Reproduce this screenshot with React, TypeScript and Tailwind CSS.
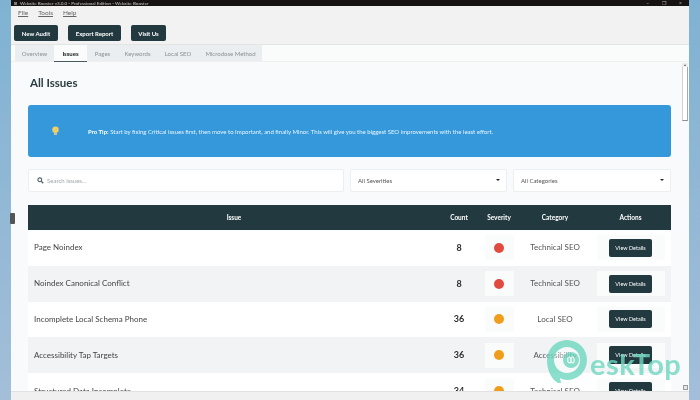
const font = { fontFamily: 'Lato, "Noto Sans", sans-serif' };

const rows = [
  { name: "Page Noindex", count: "8", color: "bg-[#e04a3f]", cat: "Technical SEO" },
  { name: "Noindex Canonical Conflict", count: "8", color: "bg-[#e04a3f]", cat: "Technical SEO" },
  { name: "Incomplete Local Schema Phone", count: "36", color: "bg-[#f09d1c]", cat: "Local SEO" },
  { name: "Accessibility Tap Targets", count: "36", color: "bg-[#f09d1c]", cat: "Accessibility" },
  { name: "Structured Data Incomplete", count: "34", color: "bg-[#f09d1c]", cat: "Technical SEO" },
];

const tabs = [
  { label: "Overview", w: "w-[39px]" },
  { label: "Pages", w: "w-[31px]" },
  { label: "Keywords", w: "w-[39px]" },
  { label: "Local SEO", w: "w-[42px]" },
  { label: "Microdose Method", w: "w-[63px]" },
];

function Caret() {
  return <span className="w-0 h-0 border-x-[2.5px] border-x-transparent border-t-[2.5px] border-t-[#222] -mt-[2px]" />;
}

function Tab({ label, w }: { label: string; w: string }) {
  return <span className={`h-[16px] flex items-center justify-center text-[6px] text-[#8a9095] bg-[#ebeef0] ${w}`}>{label}</span>;
}

export default function App() {
  return (
    <div style={font} className="w-[700px] h-[400px] overflow-hidden flex bg-[#9db9d4] blur-[0.35px] relative">
      <div className="w-[11px] shrink-0 bg-gradient-to-b from-[#7fb2d2] to-[#a3bed8]" />
      <div className="w-[678px] shrink-0 flex flex-col bg-[#f8fafb] relative">
        <div className="h-[6px] shrink-0 bg-[#161312] flex items-center justify-between pl-[3px] pr-[7px] overflow-hidden">
          <span className="flex items-center gap-[3px] text-[4.6px] leading-[6px] text-[#c9c9c9]">
            <span className="w-[3px] h-[3px] bg-[#777]" />
            Website Booster v3.0.0 - Professional Edition - Website Booster
          </span>
          <span className="flex gap-[13px] text-[5px] leading-[6px] text-[#bbb]">
            <span>–</span>
            <span>❐</span>
            <span>×</span>
          </span>
        </div>
        <div className="h-[39px] shrink-0 bg-[#f2f2f3] border-b border-[#e4e4e4]">
          <div className="flex gap-[10px] pl-[7px] pt-[3px] text-[6.5px] leading-[8px] text-[#666] h-[19px]">
            <span className="underline">File</span>
            <span className="underline">Tools</span>
            <span className="underline">Help</span>
          </div>
          <div className="flex gap-[10px] pl-[3px]">
            <button className="h-[16px] w-[44px] rounded-[2px] bg-[#21393f] text-white text-[6px] font-bold">New Audit</button>
            <button className="h-[16px] w-[53px] rounded-[2px] bg-[#21393f] text-white text-[6px] font-bold">Export Report</button>
            <button className="h-[16px] w-[35px] rounded-[2px] bg-[#21393f] text-white text-[6px] font-bold">Visit Us</button>
          </div>
        </div>
        <div className="h-[17px] shrink-0 flex pl-[4px] bg-[#fafbfb] border-b border-[#f0f0f0]">
          <Tab {...tabs[0]} />
          <span className="w-[33px] h-[17px] flex items-center justify-center text-[6px] text-[#222] font-bold bg-[#fafbfb] border-b-[1.5px] border-[#4a5a60]">Issues</span>
          {tabs.slice(1).map((t) => (
            <Tab key={t.label} {...t} />
          ))}
        </div>
        <div className="flex-1 min-h-0 overflow-hidden pl-[17px] pr-[18px] relative">
          <h1 className="text-[11.5px] leading-[16px] font-bold text-[#2b3d42] mt-[13px] ml-[2px]">All Issues</h1>
          <div className="mt-[14px] h-[52px] rounded-[3px] bg-[#3498db] flex items-center text-[6px] text-[#e8f4fc]">
            <svg width="9" height="10" viewBox="0 0 9 10" className="ml-[23px] mr-[28px] shrink-0">
              <circle cx="4.5" cy="3.8" r="3.2" fill="#f2cf63" />
              <rect x="3" y="7" width="3" height="2" fill="#c9c0a0" />
            </svg>
            <span>
              <b className="text-white">Pro Tip:</b> Start by fixing Critical issues first, then move to Important, and finally Minor. This will give you the biggest SEO improvements with the least effort.
            </span>
          </div>
          <div className="mt-[12px] flex h-[23px] gap-[6px] text-[6px] text-[#555]">
            <div className="w-[316px] rounded-[2px] bg-white border border-[#eceff1] flex items-center pl-[8px] gap-[3px] text-[#a0a6ab]">
              <svg width="7" height="7" viewBox="0 0 7 7">
                <circle cx="2.8" cy="2.8" r="1.9" fill="none" stroke="#50606a" strokeWidth="1.1" />
                <path d="M4.2 4.2 6.3 6.3" stroke="#50606a" strokeWidth="1.3" />
              </svg>
              <span>Search issues...</span>
            </div>
            <div className="w-[157px] rounded-[2px] bg-white border border-[#eceff1] flex items-center justify-between pl-[7px] pr-[6px]">
              <span>All Severities</span>
              <Caret />
            </div>
            <div className="w-[158px] rounded-[2px] bg-white border border-[#eceff1] flex items-center justify-between pl-[7px] pr-[6px]">
              <span>All Categories</span>
              <Caret />
            </div>
          </div>
          <div className="mt-[13px] w-[643px]">
            <div className="h-[25px] bg-[#21393f] flex items-center text-white text-[6.5px] font-bold text-center">
              <span className="w-[412px]">Issue</span>
              <span className="w-[38px]">Count</span>
              <span className="w-[42px]">Severity</span>
              <span className="w-[70px]">Category</span>
              <span className="w-[81px]">Actions</span>
            </div>
            {rows.map((r, i) => (
              <div key={r.name} className={`h-[35.8px] flex items-center ${i % 2 ? "bg-[#f1f3f5]" : "bg-white"}`}>
                <span className="w-[412px] pl-[6px] text-[8px] leading-[10px] pb-[1px] text-[#444]">{r.name}</span>
                <span className="w-[38px] text-center text-[9px] leading-[12px] font-bold text-[#2d2d2d]">{r.count}</span>
                <span className="w-[42px] flex justify-center">
                  <span className="w-[29px] h-[25px] flex items-center justify-center bg-[#fafbfb]">
                    <span className={`w-[10px] h-[10px] rounded-full ${r.color}`} />
                  </span>
                </span>
                <span className="w-[70px] text-center text-[8px] leading-[10px] pb-[1px] text-[#555]">{r.cat}</span>
                <span className="w-[81px] flex justify-center">
                  <span className="w-[68px] h-[25px] flex items-center justify-center bg-[#fafbfb]">
                    <span className="w-[43px] h-[18px] rounded-[2px] bg-[#21393f] text-white text-[5.5px] flex items-center justify-center">View Details</span>
                  </span>
                </span>
              </div>
            ))}
          </div>
          <div className="absolute right-[1px] top-[1px] w-[6px] h-[58px] flex flex-col">
            <div className="h-[4px] flex items-center justify-center bg-[#eeeeee]">
              <span className="w-0 h-0 border-x-[1.5px] border-x-transparent border-b-[2px] border-b-[#666]" />
            </div>
            <div className="flex-1 bg-white border-l border-l-[#d0d0d0] border-r border-r-[#a9a9a9] border-b border-b-[#8f8f8f]" />
          </div>
          <div className="absolute right-[1px] bottom-[1px] w-[5px] h-[5px] border border-[#9a9a9a] bg-[#e8e8e8]" />
        </div>
        <div className="h-[9px] shrink-0 bg-[#f0f0f0] border-t border-[#e2e2e2]" />
      </div>
      <div className="w-[11px] shrink-0 bg-gradient-to-b from-[#7fb2d2] to-[#a3bed8]" />
      <div className="absolute left-[10px] top-[213px] w-[5px] h-[11px] rounded-[1px] bg-[#555]" />
      <div className="absolute left-[545px] top-[339px] flex items-start opacity-80">
        <svg width="44" height="46" viewBox="0 0 44 46">
          <circle cx="22" cy="21" r="20" fill="#ffffff" fillOpacity="0.5" />
          <path d="M13 44C6 40 2 31 2 21a20 20 0 1 1 20 20c-3 0-5-1-7-2l1 5Z M22 8a13 13 0 0 0-13 13c0 7 6 13 13 13a13 13 0 0 0 0-26Z" fill="#6fd8c0" fillRule="evenodd" />
          <circle cx="26" cy="21" r="8" fill="#6fd8c0" />
          <path d="M23 21a1.8 1.8 0 1 1 3 0 1.8 1.8 0 1 0 3 0 1.8 1.8 0 1 0-3 0 1.8 1.8 0 1 1-3 0Z" fill="none" stroke="#fff" strokeWidth="1.1" />
        </svg>
        <span className="text-[29px] leading-[30px] font-bold tracking-[0.5px] text-[#6fd8c0] ml-[1px] mt-[10px]">eskTop</span>
      </div>
    </div>
  );
}
